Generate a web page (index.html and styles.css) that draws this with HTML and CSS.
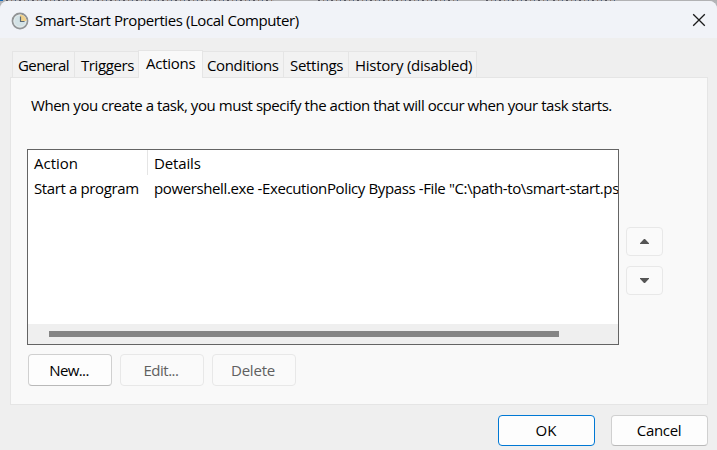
FILE: index.html
```html
<!DOCTYPE html>
<html lang="en">
<head>
<meta charset="utf-8">
<title>Smart-Start Properties (Local Computer)</title>
<link rel="stylesheet" href="styles.css">
</head>
<body>
<div class="desktop" aria-hidden="true"><i class="speck s1"></i><i class="speck s2"></i><i class="speck s3"></i><i class="speck s4"></i></div>
<main class="dialog">
  <header class="titlebar">
    <svg class="clock" viewBox="0 0 18 18">
      <circle cx="9" cy="9" r="7.5" fill="#d3e2e6" stroke="#929496" stroke-width="1.8"/>
      <circle cx="9" cy="9" r="6" fill="none" stroke="#e4e9ea" stroke-width="1"/>
      <path d="M9 9V2.6A6.4 6.4 0 0 1 15.4 9z" fill="#f0d08a"/>
      <path d="M9.5 4.5v5h4" fill="none" stroke="#5b6a76" stroke-width="1.2"/>
    </svg>
    <h1 class="title"><span class="t-title">Smart-Start Properties (Local Computer)</span></h1>
    <svg class="close" viewBox="0 0 14 14"><path d="M1.2 1.2l11.6 11.6M12.8 1.2L1.2 12.8" stroke="#1b1b1b" stroke-width="1.3" fill="none"/></svg>
  </header>
  <nav class="tabs">
    <div class="tab general"><span class="t-general">General</span></div>
    <div class="tab triggers"><span class="t-triggers">Triggers</span></div>
    <div class="tab active"><span class="t-actions">Actions</span></div>
    <div class="tab conditions"><span class="t-conditions">Conditions</span></div>
    <div class="tab settings"><span class="t-settings">Settings</span></div>
    <div class="tab history"><span class="t-history">History (disabled)</span></div>
  </nav>
  <section class="panel">
    <p class="intro"><span class="t-intro">When you create a task, you must specify the action that will occur when your task starts.</span></p>
    <div class="content">
      <div class="list">
        <div class="row head"><div class="cell first"><span>Action</span></div><div class="cell"><span class="t-details">Details</span></div></div>
        <div class="row"><div class="cell"><span class="t-start">Start a program</span></div><div class="cell"><span class="t-command">powershell.exe -ExecutionPolicy Bypass -File "C:\path-to\smart-start.ps</span></div></div>
        <div class="scrollbar"><div class="thumb"></div></div>
      </div>
      <div class="order">
        <button class="btn move" disabled aria-label="Move up"><svg viewBox="0 0 9 5"><path d="M0 5v-.8L4 0h1l4 4.2V5z"/></svg></button>
        <button class="btn move" disabled aria-label="Move down"><svg viewBox="0 0 9 5"><path d="M0 0h9v.8L5 5H4L0 .8z"/></svg></button>
      </div>
    </div>
    <div class="actions">
      <button class="btn"><span class="t-new">New...</span></button>
      <button class="btn" disabled><span class="t-edit">Edit...</span></button>
      <button class="btn" disabled><span class="t-delete">Delete</span></button>
    </div>
  </section>
  <footer class="footer">
    <button class="btn primary"><span>OK</span></button>
    <button class="btn"><span class="t-cancel">Cancel</span></button>
  </footer>
</main>
</body>
</html>
```
FILE: styles.css
```css
* { box-sizing: border-box; }
body {
  margin: 0;
  width: 717px;
  height: 450px;
  overflow: hidden;
  background: #b5b5b8;
  color: #000;
  font: 15px/20px "Open Sans", "Noto Sans", sans-serif;
  white-space: nowrap;
}
.desktop { display: flex; height: 1px; background: #b2b2b4; border-left: 3px solid #1268b4; }
.speck { height: 1px; background: repeating-linear-gradient(90deg, #55555f 0 2px, #b2b2b4 2px 5px, #8c7263 5px 6px, #a9a9ad 6px 9px, #4e6689 9px 10px, #b2b2b4 10px 13px); }
.s1 { width: 268px; margin-left: 3px; }
.s2 { width: 140px; margin-left: 44px; }
.s3 { width: 64px; margin-left: 28px; }
.s4 { width: 64px; margin-left: 3px; }
.dialog { height: 449px; background: #efefef; border-radius: 8px 8px 0 0; overflow: hidden; }
.titlebar { display: flex; align-items: center; height: 37px; padding: 0 11px; background: #f1f3f8; }
.clock { width: 18px; height: 18px; margin-top: 2px; }
.title { margin: 0 auto 0 6px; font: inherit; }
.close { width: 14px; height: 14px; }
.tabs { display: flex; align-items: flex-end; height: 39px; padding-left: 12px; }
.tab { height: 26px; padding: 3px 0 0 5px; border: 1px solid #e5e5e5; border-width: 1px 1px 0 0; background: #f2f2f2; }
.general { width: 63px; border-left-width: 1px; }
.triggers { width: 63px; padding-left: 6px; border-right: 0; }
.active { position: relative; height: 28px; width: 65px; margin-bottom: -1px; padding: 2px 0 0 7px; border-width: 1px 1px 0; background: #f9f9f9; }
.conditions { width: 81px; padding-left: 4px; }
.settings { width: 65px; padding-left: 6px; }
.history { width: 128px; padding-left: 6px; }
.panel { width: 698px; height: 328px; margin-left: 10px; padding: 17px 0 0 16px; background: #f9f9f9; border: 1px solid #e5e5e5; }
.intro { margin: 0 0 0 4px; height: 54px; }
.content { display: flex; gap: 7px; }
.list { display: flex; flex-direction: column; width: 592px; height: 196px; border: 1px solid #646464; background: #fff; overflow: hidden; }
.row { display: grid; grid-template-columns: 120px 1fr; height: 25px; }
.cell { padding: 3px 0 0 6px; overflow: hidden; }
.first { border-right: 1px solid #e5e5e5; }
.scrollbar { height: 20px; margin-top: auto; padding: 7px 0 0 21px; background: #efefef; }
.thumb { width: 510px; height: 6px; background: #858585; }
.order { display: flex; flex-direction: column; gap: 10px; padding-top: 78px; }
.btn { display: flex; align-items: center; justify-content: center; width: 84px; height: 32px; padding: 0; border: 1px solid #d0d0d0; border-bottom-color: #b9b9b9; border-radius: 4px; background: #fdfdfd; color: #000; font: inherit; }
.btn:disabled { border-color: #e8e8e8; background: #fafafa; color: #606060; }
.move { width: 37px; height: 29px; }
.move svg { width: 9px; height: 5px; margin-right: 1px; fill: #555; }
.actions { display: flex; gap: 8px; padding: 9px 0 0 1px; }
.actions .btn { padding-right: 2px; }
.footer { display: flex; justify-content: flex-end; gap: 16px; padding: 10px 9px 0 0; }
.footer .btn { width: 97px; height: 31px; padding: 0 1px 1px 0; }
.btn.primary { border-color: #0078d4; }

.t-title { letter-spacing: -0.42px; }
.t-general { letter-spacing: -0.6px; }
.t-triggers { letter-spacing: -0.4px; }
.t-actions { letter-spacing: -0.25px; }
.t-conditions { letter-spacing: -0.35px; }
.t-settings { letter-spacing: -0.3px; }
.t-history { letter-spacing: -0.25px; }
.t-intro { letter-spacing: -0.45px; }
.t-details { letter-spacing: -0.15px; }
.t-start { letter-spacing: -0.37px; }
.t-command { letter-spacing: -0.38px; }
.t-new { letter-spacing: -0.6px; }
.t-edit { letter-spacing: -0.5px; }
.t-delete { letter-spacing: -0.2px; }
.t-cancel { letter-spacing: -0.35px; }
```
